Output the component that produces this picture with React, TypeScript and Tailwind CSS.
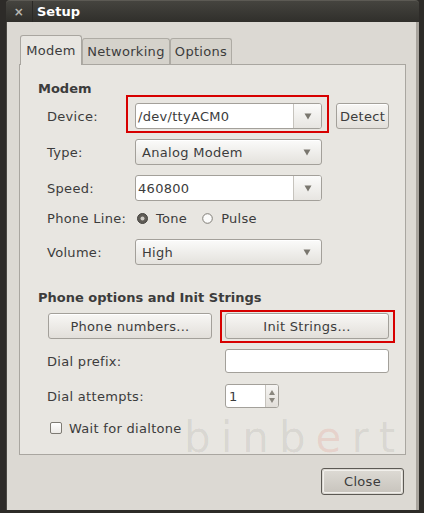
import React from 'react';

const Arrow = () => (
  <svg width="8" height="7" viewBox="0 0 8 7">
    <path d="M0.5 0.5h7L4 6.5z" fill="#7a776f" />
  </svg>
);

const ComboButton = ({ value }: { value: string }) => (
  <div className="w-[187px] h-[26px] rounded-[3px] border border-[#a3a09a] bg-gradient-to-b from-[#fbfbfa] to-[#e4e2dd] shadow-[inset_0_1px_0_#ffffff] flex items-center justify-between pl-[6px] pr-[10px]">
    <span>{value}</span>
    <Arrow />
  </div>
);

const ComboEntry = ({ value }: { value: string }) => (
  <div className="w-[187px] h-[26px] rounded-[3px] border border-[#a3a09a] bg-white flex overflow-hidden">
    <div className="flex-1 flex items-center pl-[2px]">{value}</div>
    <div className="w-[28px] border-l border-[#c6c3bd] bg-gradient-to-b from-[#fbfbfa] to-[#e7e5e1] flex items-center justify-center">
      <Arrow />
    </div>
  </div>
);

const Button = ({ label, className }: { label: string; className: string }) => (
  <div
    className={`h-[26px] rounded-[3px] border border-[#a3a09a] bg-gradient-to-b from-[#f8f7f5] to-[#e2dfda] shadow-[inset_0_1px_0_#ffffff] flex items-center justify-center ${className}`}
  >
    {label}
  </div>
);

const Radio = ({ on }: { on: boolean }) => (
  <svg width="11" height="11" viewBox="0 0 11 11">
    {on ? (
      <>
        <circle cx="5.5" cy="5.5" r="5" fill="#5f5c56" stroke="#45433f" />
        <circle cx="5.5" cy="5.5" r="2" fill="#cfccc6" />
      </>
    ) : (
      <circle cx="5.5" cy="5.5" r="4.8" fill="#fbfbfa" stroke="#7f7c75" />
    )}
  </svg>
);

const Label = ({ children }: { children: React.ReactNode }) => (
  <div className="w-[88px] shrink-0">{children}</div>
);

export default function App() {
  return (
    <div className="w-[424px] h-[513px] bg-[#2d2b28] flex flex-col font-['DejaVu_Sans',sans-serif] text-[13px] tracking-[0.3px] text-[#3c3c3c] leading-none">
      <div className="ml-[6px] w-[413px] flex flex-col">
        {/* Title bar */}
        <div className="h-[22px] bg-gradient-to-b from-[#45443f] to-[#302f2b] border-t border-[#5c5a54] rounded-t-[4px] flex items-center">
          <div className="w-[27px] h-full flex items-center justify-center text-[#b9b7b1] text-[12px] font-bold border-r border-[#2a2926]">
            ×
          </div>
          <span className="ml-[4px] text-white font-bold text-[13px] tracking-normal">Setup</span>
        </div>

        {/* Body */}
        <div className="h-[488px] bg-[#dcd9d3] border-l border-[#4a4843] border-r-[3px] border-r-[#a8a49d] pl-[12px] pt-[13px] flex flex-col relative">
          {/* Tabs */}
          <div className="h-[29px] flex items-end pl-px relative z-10">
            <div className="h-[30px] w-[62px] rounded-t-[3px] border border-b-0 border-[#a9a6a0] bg-[#e8e6e1] flex items-center justify-center -mb-px">
              Modem
            </div>
            <div className="h-[26px] w-[88px] rounded-t-[3px] border border-b-0 border-[#aeaba4] bg-[#d5d2cb] flex items-center justify-center">
              Networking
            </div>
            <div className="h-[26px] w-[62px] rounded-t-[3px] border border-b-0 border-[#aeaba4] bg-[#d5d2cb] flex items-center justify-center">
              Options
            </div>
          </div>

          {/* Notebook page */}
          <div className="w-[387px] h-[391px] border border-[#a9a6a0] bg-[#e8e6e1] pl-[18px] pt-[15px] flex flex-col relative">
            <div className="h-[16px] flex items-center font-bold tracking-normal">Modem</div>

            <div className="mt-[7px] h-[26px] pl-[9px] flex items-center">
              <Label>Device:</Label>
              <div className="relative">
                <ComboEntry value="/dev/ttyACM0" />
                <div className="absolute -left-[9px] -right-[7px] -top-[8px] -bottom-[4px] border-2 border-[#d70000]" />
              </div>
              <Button label="Detect" className="ml-[14px] w-[53px]" />
            </div>

            <div className="mt-[10px] h-[26px] pl-[9px] flex items-center">
              <Label>Type:</Label>
              <ComboButton value="Analog Modem" />
            </div>

            <div className="mt-[10px] h-[26px] pl-[9px] flex items-center">
              <Label>Speed:</Label>
              <ComboEntry value="460800" />
            </div>

            <div className="mt-[7px] h-[20px] pl-[9px] flex items-center">
              <Label>Phone Line:</Label>
              <div className="ml-[2px] flex items-center">
                <Radio on />
                <span className="ml-[8px]">Tone</span>
                <div className="ml-[15px]">
                  <Radio on={false} />
                </div>
                <span className="ml-[8px]">Pulse</span>
              </div>
            </div>

            <div className="mt-[11px] h-[26px] pl-[9px] flex items-center">
              <Label>Volume:</Label>
              <ComboButton value="High" />
            </div>

            <div className="mt-[24px] h-[16px] flex items-center font-bold tracking-normal">Phone options and Init Strings</div>

            <div className="mt-[8px] h-[26px] pl-[10px] flex items-center">
              <Button label="Phone numbers..." className="w-[164px]" />
              <div className="relative ml-[13px]">
                <Button label="Init Strings..." className="w-[164px]" />
                <div className="absolute -left-[5px] -right-[6px] -top-[3px] -bottom-[4px] border-2 border-[#d70000]" />
              </div>
            </div>

            <div className="mt-[10px] h-[24px] pl-[9px] flex items-center">
              <div className="w-[178px]">Dial prefix:</div>
              <div className="w-[164px] h-[24px] rounded-[3px] border border-[#a3a09a] bg-white" />
            </div>

            <div className="mt-[11px] h-[24px] pl-[9px] flex items-center">
              <div className="w-[178px]">Dial attempts:</div>
              <div className="w-[54px] h-[24px] rounded-[3px] border border-[#a3a09a] bg-white flex overflow-hidden">
                <div className="flex-1 flex items-center pl-[3px]">1</div>
                <div className="w-[13px] border-l border-[#c6c3bd] bg-gradient-to-b from-[#f6f5f3] to-[#e2dfda] flex flex-col items-center justify-center gap-[3px]">
                  <svg width="6" height="5" viewBox="0 0 6 5">
                    <path d="M0 5h6L3 0z" fill="#8a877f" />
                  </svg>
                  <svg width="6" height="5" viewBox="0 0 6 5">
                    <path d="M0 0h6L3 5z" fill="#8a877f" />
                  </svg>
                </div>
              </div>
            </div>

            <div className="mt-[12px] h-[16px] pl-[12px] flex items-center">
              <div className="w-[12px] h-[12px] rounded-[2px] border border-[#7d7a73] bg-gradient-to-b from-[#ffffff] to-[#eceae6]" />
              <span className="ml-[7px]">Wait for dialtone</span>
            </div>

            {/* watermark */}
            <div className="absolute left-[164px] top-[352px] text-[42px] tracking-[10px] text-[rgba(0,0,0,0.07)] pointer-events-none select-none">
              binb<span className="text-[rgba(220,70,50,0.13)]">e</span>rt
            </div>
          </div>

          <div className="mt-[13px] flex justify-end pr-[12px]">
            <div className="w-[83px] h-[27px] rounded-[3px] border border-[#5c5954] p-px">
              <div className="w-full h-full rounded-[2px] border border-[#f2f0ec] bg-gradient-to-b from-[#dcd9d3] to-[#c9c5be] flex items-center justify-center">
                Close
              </div>
            </div>
          </div>
        </div>
      </div>
    </div>
  );
}
